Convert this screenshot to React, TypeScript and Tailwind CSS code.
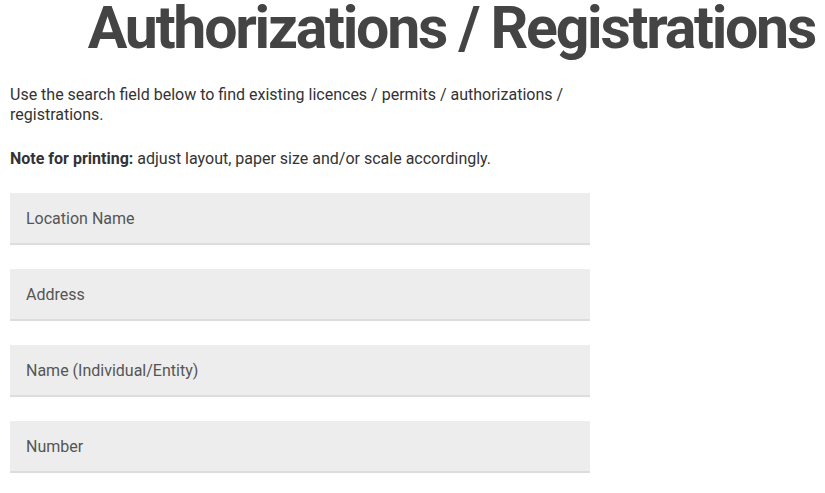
export default function App() {
  const fields = ["Location Name", "Address", "Name (Individual/Entity)", "Number"];

  return (
    <div className="w-[825px] bg-white font-['Roboto',sans-serif] text-[#333]">
      <div className="flex justify-end px-[10px]">
        <h1 className="text-[59px] leading-[56px] font-bold tracking-[-2.25px] text-[#444] whitespace-nowrap">
          Authorizations / Registrations
        </h1>
      </div>
      <div className="w-[600px] px-[10px] pt-[29px]">
        <p className="text-[16px] leading-[20px]">
          Use the search field below to find existing licences / permits / authorizations /
          registrations.
        </p>
        <p className="text-[16px] leading-[20px] mt-[24px]">
          <strong className="font-bold">Note for printing:</strong> adjust layout, paper size and/or
          scale accordingly.
        </p>
        <div className="flex flex-col gap-[24px] mt-[24px]">
          {fields.map((f) => (
            <input
              key={f}
              placeholder={f}
              className="w-[580px] h-[52px] bg-[#ededed] border-b-2 border-[#dddddd] px-[16px] text-[16px] text-[#333] placeholder:text-[#555] outline-none"
            />
          ))}
        </div>
      </div>
    </div>
  );
}
